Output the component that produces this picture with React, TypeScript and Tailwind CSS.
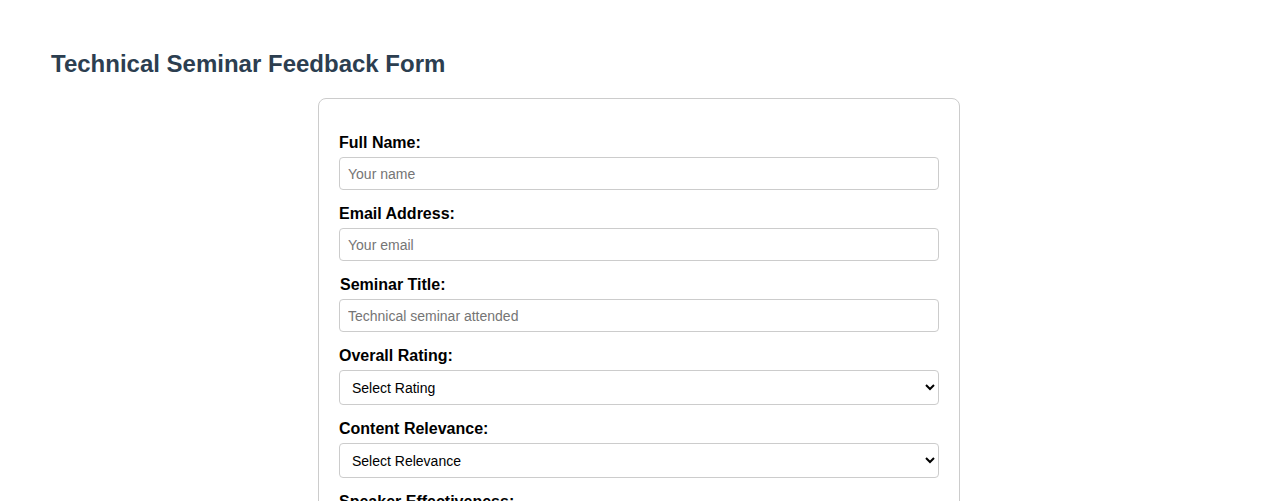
import React from 'react';

const labelCls = 'block mt-[15px] mb-[5px] text-[16px] leading-[18px] font-bold text-black';
const inputCls =
    'block w-full h-[33px] px-[8px] text-[14px] text-black border border-[#ccc] rounded-[4px] bg-white placeholder:text-[#757575] focus:outline-none';
const selectCls =
    'block w-full h-[35px] px-[8px] text-[14px] text-black border border-[#ccc] rounded-[4px] bg-white focus:outline-none';

const App: React.FC = () => (
    <div className="min-h-screen bg-white font-['Liberation_Sans',Arial,sans-serif]">
        <h1 className="pt-[50px] pl-[51px] text-[24px] leading-[28px] font-bold text-[#2c3e50]">
            Technical Seminar Feedback Form
        </h1>
        <form className="mx-auto mt-[20px] w-[642px] border border-[#ccc] rounded-[8px] p-[20px]">
            <label className={labelCls}>Full Name:</label>
            <input type="text" placeholder="Your name" className={inputCls} />

            <label className={labelCls}>Email Address:</label>
            <input type="email" placeholder="Your email" className={inputCls} />

            <label className={`${labelCls} ml-px`}>Seminar Title:</label>
            <input type="text" placeholder="Technical seminar attended" className={inputCls} />

            <label className={labelCls}>Overall Rating:</label>
            <select className={selectCls} defaultValue="">
                <option value="">Select Rating</option>
                <option value="5">Excellent</option>
                <option value="4">Good</option>
                <option value="3">Average</option>
                <option value="2">Poor</option>
            </select>

            <label className={labelCls}>Content Relevance:</label>
            <select className={selectCls} defaultValue="">
                <option value="">Select Relevance</option>
                <option value="high">Highly Relevant</option>
                <option value="medium">Somewhat Relevant</option>
                <option value="low">Not Relevant</option>
            </select>

            <label className={labelCls}>Speaker Effectiveness:</label>
            <select className={selectCls} defaultValue="">
                <option value="">Select Effectiveness</option>
                <option value="high">Very Effective</option>
                <option value="medium">Effective</option>
                <option value="low">Ineffective</option>
            </select>

            <label className={labelCls}>Additional Comments:</label>
            <textarea
                rows={4}
                placeholder="Your comments"
                className="block w-full px-[8px] py-[8px] text-[14px] border border-[#ccc] rounded-[4px]"
            />

            <button
                type="submit"
                className="mt-[15px] px-[16px] py-[8px] bg-[#2c3e50] text-white rounded-[4px] text-[14px]"
            >
                Submit Feedback
            </button>
        </form>
    </div>
);

export default App;
